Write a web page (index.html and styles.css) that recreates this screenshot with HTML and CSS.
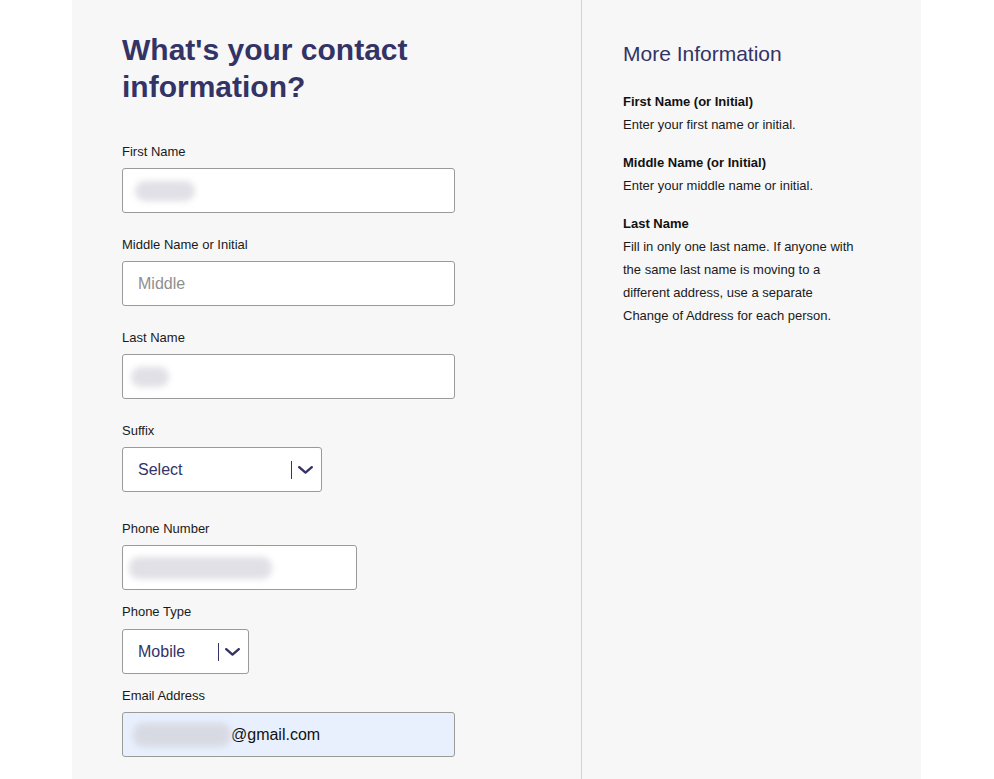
FILE: index.html
```html
<!DOCTYPE html>
<html lang="en">
<head>
<meta charset="utf-8">
<title>Contact Information</title>
<link rel="stylesheet" href="styles.css">
</head>
<body>
<div class="panel">
  <main class="form-col">
    <h1 class="title">What's your contact information?</h1>

    <div class="field">
      <label class="label">First Name</label>
      <div class="input"><span class="blur blur-first"></span></div>
    </div>

    <div class="field">
      <label class="label">Middle Name or Initial</label>
      <div class="input"><span class="placeholder">Middle</span></div>
    </div>

    <div class="field">
      <label class="label">Last Name</label>
      <div class="input"><span class="blur blur-last"></span></div>
    </div>

    <div class="field field-suffix">
      <label class="label">Suffix</label>
      <div class="select select-suffix">
        <span class="select-text">Select</span>
        <span class="select-arrow"><svg width="15" height="8" viewBox="0 0 15 8"><path d="M1.2 1.2 L7.5 6.6 L13.8 1.2" fill="none" stroke="#333366" stroke-width="2.4" stroke-linecap="round" stroke-linejoin="round"/></svg></span>
      </div>
    </div>

    <div class="field field-phone">
      <label class="label">Phone Number</label>
      <div class="input input-phone"><span class="blur blur-phone"></span></div>
    </div>

    <div class="field field-tight">
      <label class="label label-type">Phone Type</label>
      <div class="select select-type">
        <span class="select-text">Mobile</span>
        <span class="select-arrow"><svg width="15" height="8" viewBox="0 0 15 8"><path d="M1.2 1.2 L7.5 6.6 L13.8 1.2" fill="none" stroke="#333366" stroke-width="2.4" stroke-linecap="round" stroke-linejoin="round"/></svg></span>
      </div>
    </div>

    <div class="field field-tight">
      <label class="label">Email Address</label>
      <div class="input input-email"><span class="blur blur-email"></span><span class="value">@gmail.com</span></div>
    </div>
  </main>

  <aside class="info-col">
    <h2 class="info-title">More Information</h2>
    <div class="info-item">
      <h3 class="info-head">First Name (or Initial)</h3>
      <p class="info-text">Enter your first name or initial.</p>
    </div>
    <div class="info-item">
      <h3 class="info-head">Middle Name (or Initial)</h3>
      <p class="info-text">Enter your middle name or initial.</p>
    </div>
    <div class="info-item">
      <h3 class="info-head">Last Name</h3>
      <p class="info-text">Fill in only one last name. If anyone with the same last name is moving to a different address, use a separate Change of Address for each person.</p>
    </div>
  </aside>
</div>
</body>
</html>
```

FILE: styles.css
```css
* { box-sizing: border-box; }

html, body {
  margin: 0;
  padding: 0;
  background: #ffffff;
  font-family: "Liberation Sans", Arial, Helvetica, sans-serif;
  color: #1a1a1a;
}

body {
  height: 779px;
  overflow: hidden;
}

.panel {
  margin-left: 72px;
  width: 849px;
  min-height: 779px;
  background: #f7f7f7;
  display: flex;
}

.form-col {
  width: 510px;
  padding: 31px 0 0 50px;
  border-right: 1px solid #d4d4d4;
}

.title {
  margin: 0 0 39px;
  font-size: 30px;
  line-height: 37px;
  font-weight: 700;
  color: #333366;
  width: 360px;
}

.field {
  margin-bottom: 24px;
}

.field-suffix {
  margin-bottom: 29px;
}

.field-phone {
  margin-bottom: 14px;
}

.field-tight {
  margin-bottom: 14px;
}

.label {
  display: block;
  font-size: 13px;
  line-height: 16px;
  color: #1a1a1a;
  margin-bottom: 8px;
}

.label-type {
  margin-bottom: 9px;
}

.input {
  width: 333px;
  height: 45px;
  border: 1px solid #9a9a9a;
  border-radius: 3px;
  background: #ffffff;
  display: flex;
  align-items: center;
  padding: 0 15px;
  position: relative;
  font-size: 16px;
}

.input-phone { width: 235px; }

.input-email {
  background: #e8f0fe;
  padding-left: 10px;
}

.placeholder {
  color: #8f8f8f;
  font-size: 16px;
}

.value {
  color: #111;
  font-size: 16px;
}

.blur {
  display: inline-block;
  height: 20px;
  border-radius: 10px;
  background: #e0e0e6;
  filter: blur(3px);
}

.blur-first { width: 60px; margin-left: -3px; }
.blur-last { width: 38px; margin-left: -7px; }
.blur-phone { width: 143px; margin-left: -9px; height: 22px; }
.blur-email { width: 98px; height: 24px; background: #d8dae3; }

.select {
  height: 45px;
  border: 1px solid #9a9a9a;
  border-radius: 3px;
  background: #ffffff;
  display: flex;
  align-items: center;
  padding: 1px 8px 0 15px;
}

.select-suffix { width: 200px; }
.select-type { width: 127px; }

.select-text {
  flex: 1;
  font-size: 16px;
  color: #333366;
}

.select-arrow {
  display: flex;
  align-items: center;
  height: 18px;
  border-left: 1.5px solid #333366;
  padding-left: 6px;
}

.select-arrow svg { display: block; }

.info-col {
  flex: 1;
  padding: 40px 0 0 41px;
}

.info-title {
  margin: 0 0 22px;
  font-size: 21px;
  line-height: 28px;
  font-weight: 400;
  color: #333366;
}

.info-item {
  width: 232px;
  margin-bottom: 15px;
}

.info-head {
  margin: 0;
  font-size: 13px;
  line-height: 23px;
  font-weight: 700;
  color: #111;
}

.info-text {
  margin: 0;
  font-size: 13px;
  line-height: 23px;
  color: #1a1a1a;
}
```
